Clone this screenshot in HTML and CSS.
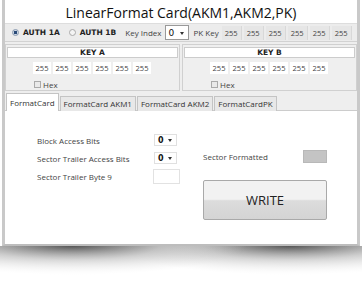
FILE: index.html
```html
<!DOCTYPE html>
<html lang="en">
<head>
  <meta charset="UTF-8">
  <title>LinearFormat Card</title>
  <link rel="stylesheet" href="styles.css">
</head>
<body>
  <div class="window">
    <div class="title">LinearFormat Card(AKM1,AKM2,PK)</div>

    <!-- auth row -->
    <div class="authbar">
      <label class="radio"><span class="dot on"></span>AUTH 1A</label>
      <label class="radio"><span class="dot"></span>AUTH 1B</label>
      <span class="lbl key-index">Key Index</span>
      <span class="select small">0<i class="arrow"></i></span>
      <span class="lbl">PK Key</span>
      <span class="vals plain">
        <span>255</span><span>255</span><span>255</span><span>255</span><span>255</span><span>255</span>
      </span>
    </div>

    <!-- keys -->
    <div class="keys">
      <div class="panel">
        <div class="panel-head">KEY A</div>
        <div class="vals">
          <span>255</span><span>255</span><span>255</span><span>255</span><span>255</span><span>255</span>
        </div>
        <label class="check"><span class="box"></span>Hex</label>
      </div>
      <div class="panel">
        <div class="panel-head">KEY B</div>
        <div class="vals">
          <span>255</span><span>255</span><span>255</span><span>255</span><span>255</span><span>255</span>
        </div>
        <label class="check"><span class="box"></span>Hex</label>
      </div>
    </div>

    <!-- tabs -->
    <div class="tabs">
      <span class="tab active">FormatCard</span>
      <span class="tab">FormatCard AKM1</span>
      <span class="tab">FormatCard AKM2</span>
      <span class="tab">FormatCardPK</span>
    </div>
    <div class="tabbody">
      <div class="form">
        <div class="row"><span class="flabel">Block Access Bits</span><span class="select">0<i class="arrow"></i></span></div>
        <div class="row"><span class="flabel">Sector Trailer Access Bits</span><span class="select">0<i class="arrow"></i></span></div>
        <div class="row"><span class="flabel">Sector Trailer Byte 9</span><span class="input"></span></div>
      </div>
      <div class="side">
        <div class="row"><span class="flabel wide">Sector Formatted</span><span class="status"></span></div>
        <button class="write">WRITE</button>
      </div>
    </div>
  </div>
  <div class="shadow"></div>
</body>
</html>
```

FILE: styles.css
```css
* {
  box-sizing: border-box;
  margin: 0;
  padding: 0;
}

body {
  width: 362px;
  height: 282px;
  overflow: hidden;
  background: #fff;
  font-family: "Open Sans", "DejaVu Sans", sans-serif;
  font-size: 8px;
  color: #333;
}

/* window frame */
.window {
  margin: 0 2px;
  height: 246px;
  border-left: 3px solid #c9c9c9;
  border-right: 3px solid #c9c9c9;
  border-bottom: 2px solid #bdbdbd;
  background: #fff;
  display: flex;
  flex-direction: column;
}

.title {
  height: 23px;
  text-align: center;
  font-size: 14px;
  line-height: 25px;
  color: #111;
}

/* auth row */
.authbar {
  height: 19px;
  background: #ececec;
  border-top: 1px solid #ddd;
  border-bottom: 1px solid #d2d2d2;
  display: flex;
  align-items: center;
  padding-left: 7px;
}

.radio {
  display: flex;
  align-items: center;
  font-weight: bold;
  font-family: "DejaVu Sans", sans-serif;
  font-size: 7.5px;
  color: #222;
  margin-right: 9px;
}

.dot {
  width: 7px;
  height: 7px;
  border-radius: 50%;
  border: 1px solid #aaa;
  background: #f4f4f4;
  margin-right: 4px;
}

.dot.on {
  background: radial-gradient(circle, #2a4a78 0 1.6px, #cfd8e4 2px);
  border-color: #8a9ab0;
}

.lbl {
  font-size: 8px;
  color: #444;
  margin-right: 3px;
}

.select {
  position: relative;
  display: inline-flex;
  align-items: center;
  width: 23px;
  height: 12px;
  background: #fff;
  border: 1px solid #e0e0e0;
  font-weight: bold;
  font-family: "DejaVu Sans", sans-serif;
  font-size: 8px;
  padding-left: 3px;
  color: #111;
}

.select.small {
  height: 15px;
  width: 24px;
  border-color: #999;
  font-weight: normal;
  font-size: 9px;
  margin-right: 5px;
}

.arrow {
  position: absolute;
  right: 4px;
  top: 50%;
  margin-top: -1px;
  border-left: 2px solid transparent;
  border-right: 2px solid transparent;
  border-top: 3px solid #333;
}

.vals {
  display: flex;
  gap: 2px;
}

.vals span {
  width: 18px;
  height: 12px;
  background: #fff;
  text-align: center;
  line-height: 12px;
  font-size: 7.5px;
  color: #444;
}

.vals.plain span {
  background: #e6e6e6;
  height: 14px;
  line-height: 14px;
  border-right: 1px solid #d8d8d8;
  width: 20px;
}

/* key panels */
.keys {
  display: flex;
  gap: 2px;
  padding: 2px 0 1px;
  background: #eee;
}

.panel {
  flex: 1;
  height: 47px;
  background: #efefef;
  border: 1px solid #d0d0d0;
  padding: 2px 1px 0;
}

.panel-head {
  height: 11px;
  background: #fff;
  border: 1px solid #ccc;
  text-align: center;
  font-family: "DejaVu Sans", sans-serif;
  font-weight: bold;
  font-size: 7.5px;
  line-height: 10px;
  color: #222;
}

.panel .vals {
  margin: 4px 0 0 26px;
}

.check {
  display: flex;
  align-items: center;
  margin: 5px 0 0 27px;
  font-size: 8px;
  color: #444;
}

.box {
  width: 7px;
  height: 7px;
  border: 1px solid #aaa;
  background: #e9e9e9;
  margin-right: 2px;
}

/* tabs */
.tabs {
  display: flex;
  align-items: flex-end;
  height: 19px;
  background: #eee;
  padding-left: 1px;
  border-bottom: 1px solid #ccc;
}

.tab {
  height: 15px;
  padding: 0 3px;
  margin-right: 1px;
  border: 1px solid #c4c4c4;
  border-bottom: none;
  background: #e8e8e8;
  font-size: 8px;
  line-height: 14px;
  color: #333;
  margin-bottom: -1px;
}

.tab.active {
  height: 18px;
  background: #fff;
  line-height: 17px;
}

.tabbody {
  flex: 1;
  display: flex;
  padding: 20px 0 0 32px;
}

.form {
  width: 143px;
  margin-top: 2px;
}

.row {
  display: flex;
  align-items: center;
  height: 14px;
  margin-bottom: 4px;
}

.flabel {
  width: 117px;
  font-size: 8px;
  color: #444;
}

.flabel.wide {
  width: 100px;
}

.input {
  width: 27px;
  height: 15px;
  border: 1px solid #e2e2e2;
  background: #fff;
}

.side {
  margin-left: 23px;
  padding-top: 18px;
}

.status {
  width: 24px;
  height: 13px;
  background: #c4c4c4;
  border: 1px solid #b8b8b8;
}

.write {
  display: block;
  margin-top: 17px;
  width: 124px;
  height: 40px;
  border: 1px solid #a9a9a9;
  border-radius: 2px;
  background: linear-gradient(#f2f2f2 0 48%, #dcdcdc 52%, #d4d4d4);
  font-family: "Open Sans", sans-serif;
  font-size: 13px;
  color: #222;
}

/* page curl shadow */
.shadow {
  height: 36px;
  background:
    linear-gradient(#fff0 0, #fff 90%),
    radial-gradient(ellipse 60% 100% at 20% 0, #555 0, #bbb 40%, #fff0 80%),
    radial-gradient(ellipse 60% 100% at 80% 0, #555 0, #bbb 40%, #fff0 80%),
    #fff;
}
```
